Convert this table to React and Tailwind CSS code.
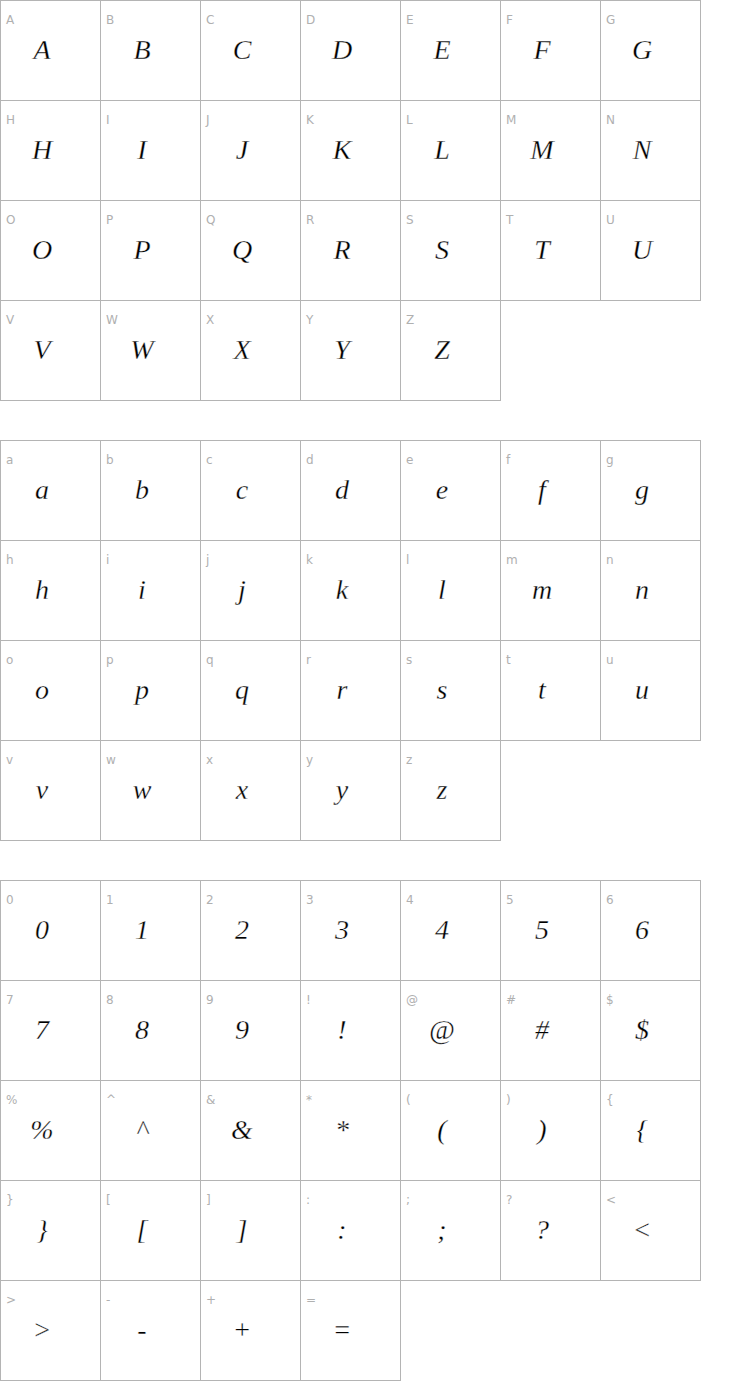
const UPPER = 'ABCDEFGHIJKLMNOPQRSTUVWXYZ'.split('')
const LOWER = 'abcdefghijklmnopqrstuvwxyz'.split('')
// order as in the reference sheet
const SYMBOLS = ['0','1','2','3','4','5','6','7','8','9','!','@','#','$','%','^','&','*','(',')','{','}','[',']',':',';','?','<','>','-','+','=']

function Cell({ ch }) {
  return (
    <div className="w-[100px] h-[100px] border-r border-b border-[#b4b4b4] flex flex-col">
      <div
        className="h-[34px] pl-[5px] pt-[13px] text-[12px] leading-[12px] text-[#b0b0b0]"
        style={{ fontFamily: '"DejaVu Sans", sans-serif' }}
      >
        {ch}
      </div>
      <div
        className="pr-[17px] text-center text-[28px] leading-[30px] italic text-black [-webkit-text-stroke:0.3px_white]"
        style={{ fontFamily: '"Liberation Serif", serif' }}
      >
        {ch}
      </div>
    </div>
  )
}

function Sheet({ chars, last }) {
  return (
    <div className={last ? '' : 'mb-[39px]'}>
      <div className="grid grid-cols-[repeat(7,100px)] w-[701px] border-l border-t border-[#b4b4b4]">
        {chars.map((c) => (
          <Cell key={c} ch={c} />
        ))}
      </div>
    </div>
  )
}

export default function App() {
  return (
    <div className="w-[740px] min-h-[1400px] bg-white">
      <Sheet chars={UPPER} />
      <Sheet chars={LOWER} />
      <Sheet chars={SYMBOLS} last />
    </div>
  )
}
